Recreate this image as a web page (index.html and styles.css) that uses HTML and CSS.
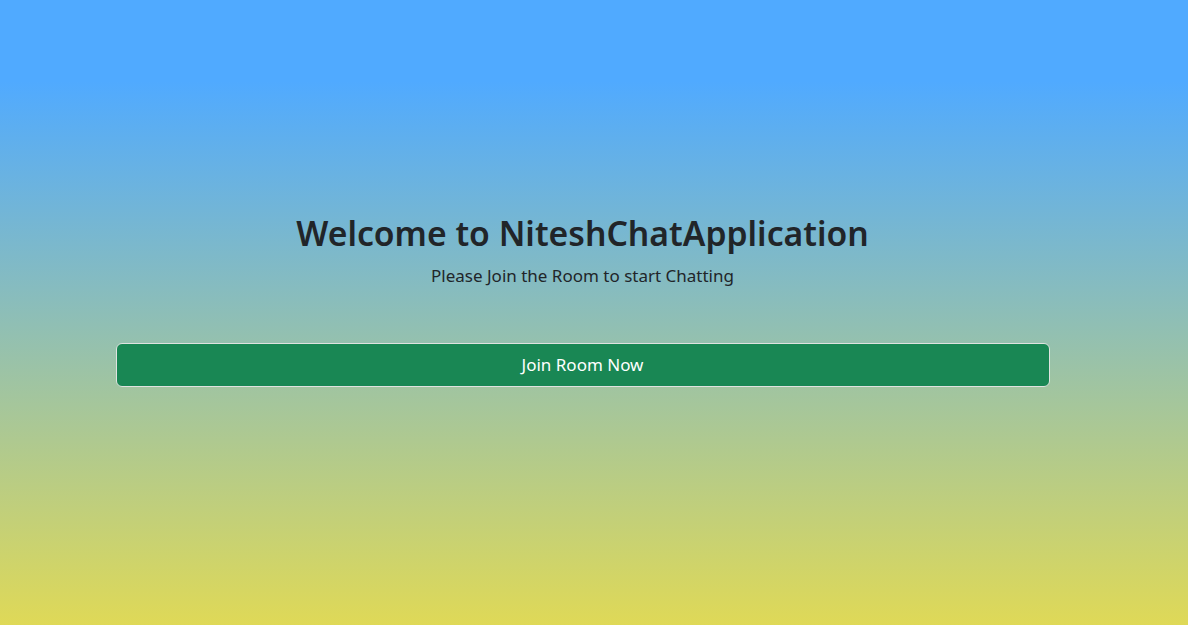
FILE: index.html
```html
<!DOCTYPE html>
<html lang="en">
<head>
<meta charset="utf-8">
<title>NiteshChatApplication</title>
<link rel="stylesheet" href="styles.css">
</head>
<body>
<main class="page">
  <section class="hero">
    <h1 class="title">Welcome to NiteshChatApplication</h1>
    <p class="subtitle">Please Join the Room to start Chatting</p>
    <button class="join-btn" type="button">Join Room Now</button>
  </section>
</main>
</body>
</html>
```
FILE: styles.css
```css
html, body {
  margin: 0;
  padding: 0;
  height: 100%;
}
body {
  font-family: "Noto Sans", "Open Sans", sans-serif;
  color: #212529;
  background: linear-gradient(to bottom, #50aaff 0%, #50aaff 13%, #dfd957 100%);
}
.page {
  min-height: 100vh;
  box-sizing: border-box;
  padding: 212px 23px 0 0;
}
.hero {
  width: 934px;
  margin: 0 auto;
  display: flex;
  flex-direction: column;
  align-items: center;
}
.title {
  margin: 0;
  font-size: 33.7px;
  font-weight: 600;
  line-height: 1.25;
}
.subtitle {
  margin: 9px 0 0;
  font-size: 17px;
  line-height: 1.5;
}
.join-btn {
  margin-top: 54px;
  width: 100%;
  height: 44px;
  background: #198754;
  color: #fff;
  border: 1px solid #dfe3e0;
  border-radius: 6px;
  font-family: inherit;
  font-size: 17px;
  cursor: pointer;
}
```
